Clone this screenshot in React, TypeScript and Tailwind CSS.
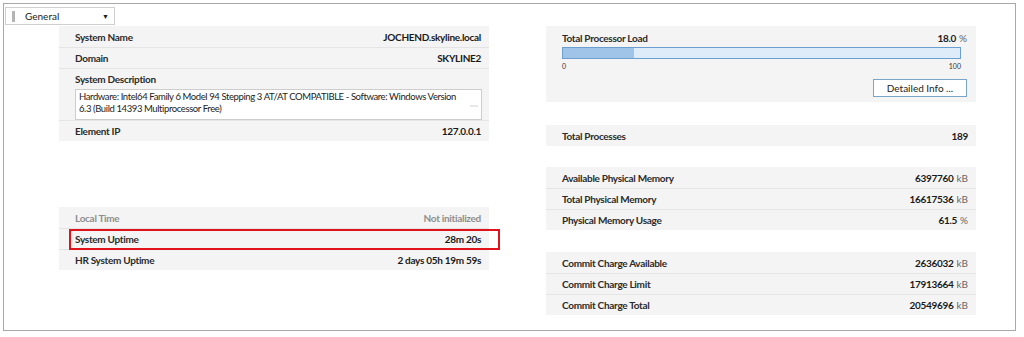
import React from 'react';

type Row = { label: string; value: string; unit?: string; muted?: boolean };

const font = { fontFamily: 'Lato, "Open Sans", sans-serif' };

function InfoRow({ row, first }: { row: Row; first?: boolean }) {
  return (
    <div
      className={`flex h-[21px] items-center justify-between pl-4 pr-[8px] ${
        first ? 'pt-[2px]' : 'border-t border-[#e4e4e4]'
      }`}
    >
      <span
        className={`text-[10px] font-bold tracking-[-0.3px] ${row.muted ? 'text-[#8e8e8e]' : 'text-[#2b2b2b]'}`}
      >
        {row.label}
      </span>
      <span
        className={`text-[10px] font-bold tracking-[-0.3px] ${row.muted ? 'text-[#8e8e8e]' : 'text-[#1a1a1a]'}`}
      >
        {row.value}
        {row.unit && <span className="ml-[3px] font-normal tracking-normal text-[#666]">{row.unit}</span>}
      </span>
    </div>
  );
}

function Panel({ rows }: { rows: Row[] }) {
  return (
    <div className="bg-[#f4f4f4]">
      {rows.map((r, i) => (
        <InfoRow key={r.label} row={r} first={i === 0} />
      ))}
    </div>
  );
}

export default function App() {
  const load = 18;

  return (
    <div className="h-[337px] w-[1024px] bg-white" style={font}>
      <div className="ml-[3px] pt-[3px]">
        <div className="h-[328px] w-[1013px] border border-[#a8a8a8] pl-[1px] pt-[3px]">
          {/* view selector */}
          <div className="flex h-[18px] w-[110px] items-center border border-[#cfcfcf] bg-white">
            <span className="ml-[6px] h-[11px] w-[3px] bg-[#b4b4b4]" />
            <span className="ml-[10px] text-[10px] text-[#222]">General</span>
            <span className="ml-auto mr-[5px] text-[7px] text-[#222]">▼</span>
          </div>

          <div className="mt-[1px] flex">
            {/* left column */}
            <div className="ml-[54px] w-[430px]">
              <div className="bg-[#f4f4f4]">
                <InfoRow first row={{ label: 'System Name', value: 'JOCHEND.skyline.local' }} />
                <InfoRow row={{ label: 'Domain', value: 'SKYLINE2' }} />
                <div className="h-[52px] border-t border-[#e4e4e4] pl-4 pr-[7px] pt-[4px]">
                  <div className="text-[10px] font-bold leading-[12px] tracking-[-0.3px] text-[#2b2b2b]">
                    System Description
                  </div>
                  <div className="relative mt-[4px] h-[31px] overflow-hidden whitespace-nowrap border border-[#cdcdcd] bg-white pl-[3px] pt-[1px] text-[9.5px] leading-[12px] tracking-[-0.4px] text-[#222]">
                    Hardware: Intel64 Family 6 Model 94 Stepping 3 AT/AT COMPATIBLE - Software: Windows Version
                    <br />
                    6.3 (Build 14393 Multiprocessor Free)
                    <span className="absolute right-[3px] top-[15px] h-[2px] w-[8px] bg-[#e8e8e8]" />
                  </div>
                </div>
                <InfoRow row={{ label: 'Element IP', value: '127.0.0.1' }} />
              </div>

              <div className="relative mt-[66px]">
                <Panel
                  rows={[
                    { label: 'Local Time', value: 'Not initialized', muted: true },
                    { label: 'System Uptime', value: '28m 20s' },
                    { label: 'HR System Uptime', value: '2 days 05h 19m 59s' },
                  ]}
                />
                {/* highlight */}
                <div className="absolute left-[10px] top-[22px] h-[21px] w-[431px] border-2 border-[#e0121b]" />
              </div>
            </div>

            {/* right column */}
            <div className="ml-[57px] w-[430px]">
              <div className="h-[76px] bg-[#f4f4f4] pl-4 pr-[9px] pt-[6px]">
                <div className="flex h-[12px] items-center justify-between">
                  <span className="text-[10px] font-bold tracking-[-0.3px] text-[#2b2b2b]">Total Processor Load</span>
                  <span className="text-[10px] font-bold tracking-[-0.3px] text-[#1a1a1a]">
                    18.0<span className="ml-[3px] font-normal tracking-normal text-[#666]">%</span>
                  </span>
                </div>
                <div className="mr-[6px] mt-[3px] h-[12px] border border-[#6a9fd0] bg-[#deebf8]">
                  <div className="h-full bg-[#a0c4e7]" style={{ width: `${load}%` }} />
                </div>
                <div className="mr-[6px] mt-[3px] flex justify-between text-[7px] leading-[9px] text-[#333]">
                  <span>0</span>
                  <span>100</span>
                </div>
                <div className="mt-[8px] flex justify-end">
                  <button className="h-[18px] w-[94px] border border-[#7aa6cc] bg-white text-[10px] text-[#222]">
                    Detailed Info ...
                  </button>
                </div>
              </div>

              <div className="mt-[23px]">
                <Panel rows={[{ label: 'Total Processes', value: '189' }]} />
              </div>

              <div className="mt-[21px]">
                <Panel
                  rows={[
                    { label: 'Available Physical Memory', value: '6397760', unit: 'kB' },
                    { label: 'Total Physical Memory', value: '16617536', unit: 'kB' },
                    { label: 'Physical Memory Usage', value: '61.5', unit: '%' },
                  ]}
                />
              </div>

              <div className="mt-[22px]">
                <Panel
                  rows={[
                    { label: 'Commit Charge Available', value: '2636032', unit: 'kB' },
                    { label: 'Commit Charge Limit', value: '17913664', unit: 'kB' },
                    { label: 'Commit Charge Total', value: '20549696', unit: 'kB' },
                  ]}
                />
              </div>
            </div>
          </div>
        </div>
      </div>
    </div>
  );
}
